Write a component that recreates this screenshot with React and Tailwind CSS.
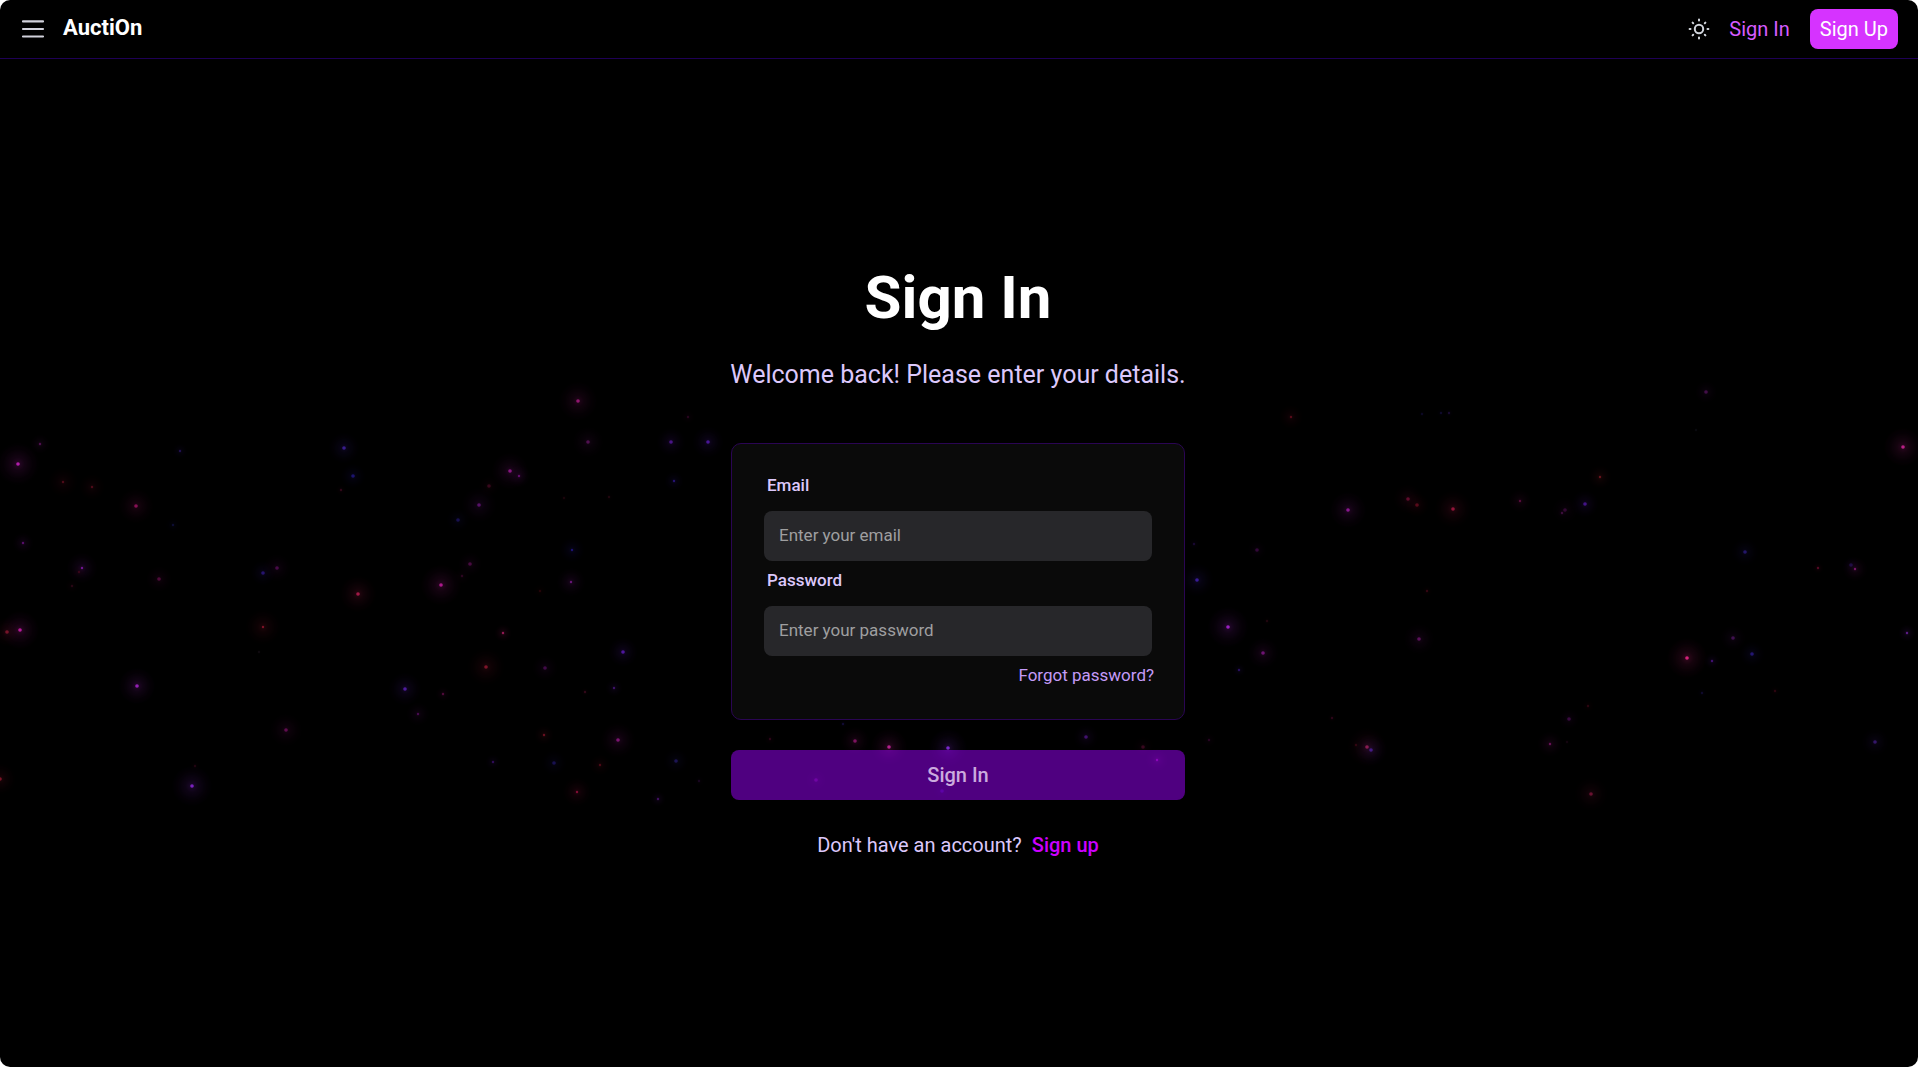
import React from "react";

// x, y, core radius, glow radius, colour, strength
const PARTICLES = [
  [18, 464, 2, 22, "#d024c8", 0.85], [40, 444, 1, 10, "#a020a0", 0.5], [63, 482, 1, 16, "#b01838", 0.45],
  [92, 487, 1, 14, "#b01838", 0.45], [136, 506, 2, 18, "#c01878", 0.7], [180, 451, 1, 8, "#4020a0", 0.5],
  [173, 525, 1, 8, "#202080", 0.4], [23, 543, 1, 11, "#9018b0", 0.6], [82, 568, 1, 16, "#a020d0", 0.7],
  [79, 572, 1, 8, "#a01030", 0.3], [72, 586, 1, 8, "#a01850", 0.25], [159, 579, 2, 14, "#b01880", 0.45],
  [20, 630, 2, 20, "#d820b8", 0.85], [7, 632, 2, 15, "#c02040", 0.6], [137, 686, 2, 19, "#b828e0", 0.8],
  [192, 786, 2, 21, "#9028e0", 0.85], [195, 766, 1, 6, "#a01850", 0.2], [0, 779, 2, 16, "#d02040", 0.6],
  [344, 448, 2, 16, "#5028c8", 0.7], [353, 476, 2, 13, "#3020b8", 0.6], [341, 490, 1, 6, "#a01850", 0.3],
  [263, 573, 2, 13, "#4020b8", 0.6], [277, 568, 2, 15, "#a018a0", 0.45], [358, 594, 2, 19, "#c82058", 0.8],
  [263, 627, 1, 18, "#d02040", 0.6], [259, 652, 1, 4, "#302030", 0.3], [286, 730, 2, 17, "#b01890", 0.55],
  [578, 401, 2, 20, "#d020a0", 0.7], [588, 442, 2, 16, "#a020a0", 0.5], [688, 417, 1, 8, "#801060", 0.3],
  [671, 442, 2, 15, "#7020d0", 0.65], [708, 442, 2, 16, "#6820d8", 0.7], [510, 471, 2, 19, "#c020b8", 0.7],
  [519, 476, 1, 12, "#a018b0", 0.6], [489, 486, 2, 11, "#a01850", 0.35], [479, 505, 2, 18, "#a020c0", 0.55],
  [458, 520, 2, 12, "#3020a0", 0.5], [674, 481, 1, 10, "#4020c0", 0.6], [564, 498, 1, 5, "#801838", 0.2],
  [609, 497, 1, 5, "#801838", 0.25], [572, 550, 1, 13, "#3020c0", 0.6], [571, 582, 1, 15, "#a020b8", 0.65],
  [470, 564, 2, 13, "#a01890", 0.45], [462, 576, 1, 9, "#801060", 0.35], [441, 585, 2, 21, "#d820b0", 0.8],
  [540, 591, 1, 8, "#901020", 0.25], [503, 633, 1, 9, "#e02880", 0.65], [486, 667, 2, 19, "#c02040", 0.65],
  [545, 668, 2, 14, "#9018a0", 0.45], [623, 652, 2, 15, "#7020e0", 0.7], [614, 688, 1, 9, "#7020c0", 0.55],
  [585, 692, 1, 5, "#a01850", 0.3], [405, 689, 2, 17, "#7028e0", 0.7], [418, 714, 1, 12, "#9018a0", 0.5],
  [443, 694, 1, 8, "#b01880", 0.45], [544, 735, 1, 10, "#d02040", 0.5], [618, 740, 2, 18, "#c020b0", 0.65],
  [600, 765, 1, 11, "#c01838", 0.4], [577, 792, 1, 15, "#d81858", 0.6], [554, 763, 2, 13, "#3020a0", 0.5],
  [493, 762, 1, 8, "#6018b0", 0.5], [676, 761, 2, 13, "#3828a8", 0.5], [658, 799, 1, 8, "#8020c0", 0.5],
  [699, 781, 1, 6, "#601880", 0.25], [770, 739, 1, 7, "#901050", 0.3], [843, 724, 1, 5, "#302090", 0.35],
  [855, 741, 2, 15, "#d020a0", 0.6], [889, 747, 2, 19, "#e028b0", 0.8], [948, 748, 2, 20, "#9030f0", 0.85],
  [1086, 737, 2, 13, "#7820c8", 0.55], [1143, 747, 2, 11, "#a01858", 0.35], [1157, 760, 1, 12, "#f020e0", 0.5],
  [816, 780, 2, 12, "#c020d0", 0.35], [942, 791, 2, 10, "#5010e0", 0.35],
  [1291, 417, 1, 13, "#c01838", 0.45], [1422, 414, 1, 4, "#302090", 0.25], [1441, 413, 1, 5, "#302090", 0.3],
  [1449, 413, 1, 5, "#5020a0", 0.3], [1348, 510, 2, 19, "#b820c0", 0.75], [1408, 499, 2, 15, "#c01858", 0.5],
  [1417, 505, 2, 13, "#c01838", 0.45], [1453, 509, 2, 19, "#e02058", 0.65], [1520, 501, 1, 12, "#b01878", 0.5],
  [1194, 544, 1, 7, "#5018a0", 0.3], [1257, 550, 2, 10, "#9018a0", 0.35], [1197, 580, 2, 17, "#5028d8", 0.7],
  [1228, 627, 2, 21, "#c028f0", 0.8], [1267, 621, 1, 5, "#801838", 0.25], [1263, 653, 2, 16, "#b820c0", 0.6],
  [1239, 670, 1, 7, "#5020c0", 0.5], [1427, 591, 1, 6, "#901030", 0.35], [1419, 639, 2, 16, "#a820a8", 0.55],
  [1332, 718, 1, 5, "#901050", 0.3], [1367, 747, 2, 20, "#c82868", 0.7], [1371, 750, 2, 17, "#6028c8", 0.65],
  [1209, 740, 1, 8, "#801070", 0.3], [1356, 745, 1, 5, "#901030", 0.3],
  [1706, 392, 2, 12, "#9020a0", 0.45], [1903, 447, 2, 20, "#e828a8", 0.8], [1600, 477, 1, 12, "#d02838", 0.5],
  [1585, 504, 2, 14, "#7020e0", 0.6], [1565, 510, 2, 14, "#901890", 0.35], [1562, 513, 1, 5, "#902090", 0.4],
  [1745, 552, 2, 14, "#4028c0", 0.55], [1851, 565, 2, 9, "#4020a0", 0.4], [1855, 569, 1, 13, "#b820a0", 0.65],
  [1818, 568, 1, 6, "#d01858", 0.4], [1687, 658, 2, 21, "#f82890", 0.85], [1733, 638, 2, 13, "#8020a0", 0.5],
  [1752, 654, 2, 13, "#4028d0", 0.55], [1712, 661, 1, 8, "#8020e0", 0.5], [1907, 633, 1, 9, "#9830e0", 0.6],
  [1702, 693, 1, 6, "#302090", 0.3], [1775, 691, 1, 6, "#901030", 0.3], [1588, 706, 1, 7, "#901030", 0.3],
  [1569, 719, 2, 11, "#801890", 0.45], [1550, 744, 1, 13, "#c020a0", 0.55], [1591, 794, 2, 17, "#c02058", 0.55],
  [1875, 742, 2, 14, "#6028c0", 0.55], [1567, 742, 1, 4, "#401030", 0.3], [1696, 430, 1, 4, "#202030", 0.3],
];

function Starfield() {
  return (
    <svg
      aria-hidden="true"
      viewBox="0 0 1918 1067"
      preserveAspectRatio="xMidYMid slice"
      className="pointer-events-none absolute inset-0 h-full w-full"
    >
      <defs>
        <radialGradient id="halo">
          <stop offset="0" stopColor="white" stopOpacity="0.24" />
          <stop offset="0.3" stopColor="white" stopOpacity="0.11" />
          <stop offset="0.65" stopColor="white" stopOpacity="0.04" />
          <stop offset="1" stopColor="white" stopOpacity="0" />
        </radialGradient>
        <mask id="haloMask" maskContentUnits="objectBoundingBox">
          <circle cx="0.5" cy="0.5" r="0.5" fill="url(#halo)" />
        </mask>
      </defs>
      {PARTICLES.map(([x, y, core, glow, color, strength]) => (
        <g key={`${x}-${y}`} opacity={strength}>
          <circle cx={x} cy={y} r={glow} fill={color} mask="url(#haloMask)" />
          <circle cx={x} cy={y} r={core === 2 ? 1.8 : 1.2} fill={color} />
        </g>
      ))}
    </svg>
  );
}

function MenuIcon() {
  return (
    <svg viewBox="0 0 30 30" className="size-[30px]" stroke="currentColor" strokeWidth="2.2" strokeLinecap="round">
      <path d="M5 7.4h20M5 15h20M5 22.5h20" />
    </svg>
  );
}

function SunIcon() {
  return (
    <svg viewBox="0 0 24 24" className="size-6" fill="none" stroke="currentColor" strokeWidth="2" strokeLinecap="round">
      <circle cx="12" cy="12" r="4.2" />
      <path d="M12 2.6v.9M12 20.5v.9M2.6 12h.9M20.5 12h.9M5.6 5.6l.6.6M17.8 17.8l.6.6M5.6 18.4l.6-.6M17.8 6.2l.6-.6" />
    </svg>
  );
}

function Field({ id, label, type, placeholder }) {
  return (
    <div className="flex flex-col">
      <label htmlFor={id} className="px-[3px] pt-[7px] pb-[13px] text-[17px] leading-[25px] font-medium text-[#dcc8fb]">
        {label}
      </label>
      <input
        id={id}
        type={type}
        placeholder={placeholder}
        className="h-[50px] w-full rounded-lg bg-[#27272a] px-[15px] pb-[2px] text-[17px] text-white outline-none placeholder:text-[#9f9fa0]"
      />
    </div>
  );
}

export default function App() {
  return (
    <div className="min-h-screen bg-white font-['Roboto',sans-serif]">
      <div className="relative flex min-h-screen flex-col overflow-hidden rounded-[10px] bg-black">
        <Starfield />
        <header className="relative flex h-[59px] items-center justify-between border-b border-[#1e0055] pr-5 pl-[18px]">
          <div className="flex items-center gap-[15px]">
            <button type="button" aria-label="Open menu" className="text-[#d1d1db]">
              <MenuIcon />
            </button>
            <a href="#home" className="pb-[2px] text-[22px] leading-7 font-bold text-white">AuctiOn</a>
          </div>
          <nav className="flex items-center">
            <button type="button" aria-label="Toggle theme" className="mr-[18px] text-[#d1d5dc]">
              <SunIcon />
            </button>
            <a href="#signin" className="mr-5 text-xl text-[#d65cff]">Sign In</a>
            <a href="#signup" className="flex h-10 items-center rounded-lg bg-[#d633ff] px-[10px] text-xl text-white">Sign Up</a>
          </nav>
        </header>
        <main className="relative flex flex-1 flex-col items-center justify-center pr-[2px]">
          <form className="flex w-[454px] max-w-full flex-col items-center pt-px">
            <h1 className="text-6xl leading-[60px] font-bold text-white">Sign In</h1>
            <p className="mt-[29px] text-[25px] leading-[35px] whitespace-nowrap text-[#dcc8fb]">
              Welcome back! Please enter your details.
            </p>
            <div className="mt-[51px] flex w-full flex-col rounded-[10px] border border-[#2a0553] bg-[#0a0a0a] px-8 pt-[22px] pb-[31px]">
              <Field id="email" label="Email" type="email" placeholder="Enter your email" />
              <Field id="password" label="Password" type="password" placeholder="Enter your password" />
              <a href="#forgot" className="-mr-[2px] mt-[7px] self-end text-[17px] leading-[25px] text-[#c49bf8]">
                Forgot password?
              </a>
            </div>
            <button type="submit" className="mt-[30px] h-[50px] w-full rounded-lg bg-[#9d00ff]/50 text-xl font-medium text-[#cbabde]">
              Sign In
            </button>
            <p className="mt-[30px] flex gap-[10px] text-xl leading-[30px] text-[#dcc8fb]">
              Don't have an account?
              <a href="#signup" className="font-medium text-[#cc00ff]">Sign up</a>
            </p>
          </form>
        </main>
      </div>
    </div>
  );
}
